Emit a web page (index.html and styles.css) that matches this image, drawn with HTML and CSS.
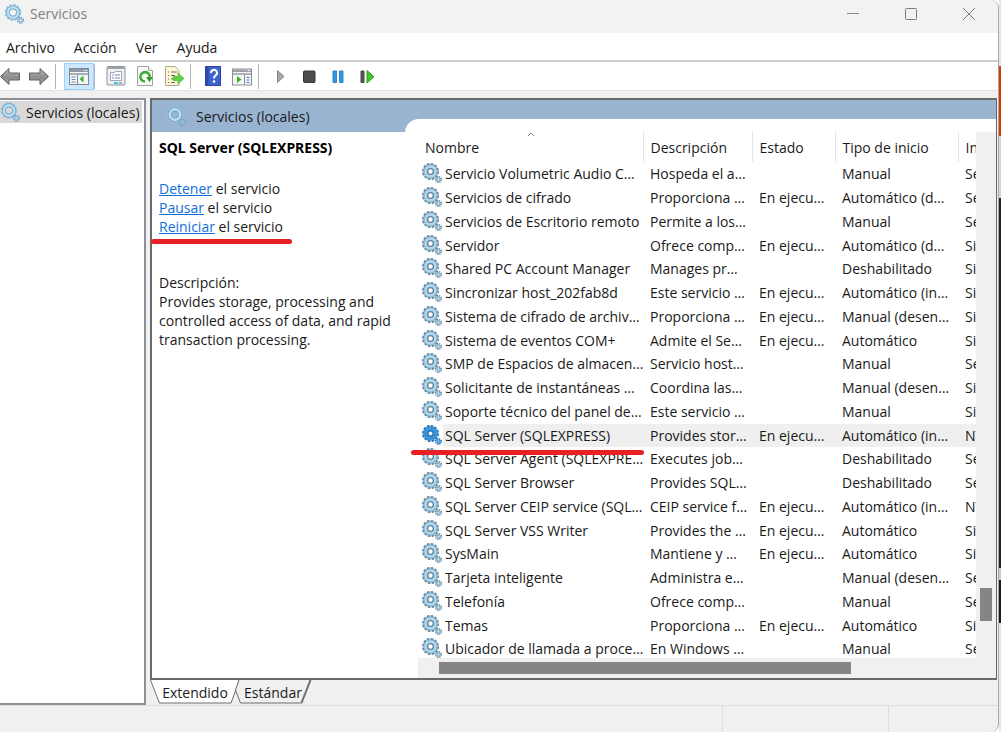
FILE: index.html
```
<!DOCTYPE html>
<html lang="es">
<head>
<meta charset="utf-8">
<title>Servicios</title>
<link rel="stylesheet" href="styles.css">
</head>
<body>
<svg class="defs" aria-hidden="true">
  <symbol id="gear" viewBox="0 0 20 20">
    <circle cx="8.500" cy="8.500" r="7.400" fill="none" stroke="#5f8399" stroke-width="2.200" stroke-dasharray="2.6 1.27"/>
    <circle cx="8.500" cy="8.500" r="5" fill="none" stroke="#7fabc8" stroke-width="4.600"/>
    <circle cx="8.500" cy="8.500" r="4.600" fill="none" stroke="#b0d6ec" stroke-width="3.200"/>
    <circle cx="8.500" cy="8.500" r="2.900" fill="#fff" stroke="#5f8095" stroke-width="1.300"/>
    <circle cx="16.500" cy="16.500" r="2.900" fill="none" stroke="#5f8399" stroke-width="1.400" stroke-dasharray="1.3 .98"/>
    <circle cx="16.500" cy="16.500" r="1.700" fill="#dceef8" stroke="#86afca" stroke-width="1.500"/>
  </symbol>
  <symbol id="gear-on" viewBox="0 0 20 20">
    <circle cx="8.500" cy="8.500" r="7.400" fill="none" stroke="#1c6fb4" stroke-width="2.200" stroke-dasharray="2.6 1.27"/>
    <circle cx="8.500" cy="8.500" r="4.900" fill="none" stroke="#3a92d8" stroke-width="4.800"/>
    <circle cx="8.500" cy="8.500" r="2.600" fill="#e8f4fd" stroke="#1f6fb0" stroke-width="1.200"/>
    <circle cx="16.500" cy="16.500" r="2.900" fill="none" stroke="#1c6fb4" stroke-width="1.400" stroke-dasharray="1.3 .98"/>
    <circle cx="16.500" cy="16.500" r="1.700" fill="#9ccbf0" stroke="#3a92d8" stroke-width="1.500"/>
  </symbol>
  <symbol id="gear-soft" viewBox="0 0 20 20">
    <circle cx="9" cy="8.500" r="7.500" fill="none" stroke="#9dc3dc" stroke-width="1.800" stroke-dasharray="2.400 1.530"/>
    <circle cx="9" cy="8.500" r="5.200" fill="none" stroke="#6fa3c8" stroke-width="4.200"/>
    <circle cx="9" cy="8.500" r="5.200" fill="none" stroke="#b9dff2" stroke-width="2.600"/>
    <circle cx="16.500" cy="16.300" r="2.900" fill="none" stroke="#6f9cbc" stroke-width="1.400" stroke-dasharray="1.3 .98"/>
    <circle cx="16.500" cy="16.300" r="1.700" fill="none" stroke="#8fbcd8" stroke-width="1.500"/>
  </symbol>
  <linearGradient id="arrow-fill" x1="0" y1="0" x2="0" y2="1">
    <stop offset="0" stop-color="#bdbdbd"/><stop offset=".55" stop-color="#8c8c8c"/><stop offset="1" stop-color="#a5a5a5"/>
  </linearGradient>
</svg>

<div class="desktop">
<div class="window">
  <header class="titlebar">
    <svg class="icon"><use href="#gear-soft"/></svg>
    <span class="title">Servicios</span>
    <button class="caption" aria-label="Minimizar"><svg viewBox="0 0 14 14"><path d="M1 6.5h12" stroke="#8a8a8a"/></svg></button>
    <button class="caption" aria-label="Maximizar"><svg viewBox="0 0 14 14"><rect x="1.5" y="1.500" width="11" height="11" rx="1" fill="none" stroke="#7c7c7c"/></svg></button>
    <button class="caption" aria-label="Cerrar"><svg viewBox="0 0 14 14"><path d="M1 1l12 12M13 1L1 13" stroke="#7c7c7c"/></svg></button>
  </header>

  <nav class="menubar">
    <button>Archivo</button><button>Acción</button><button>Ver</button><button>Ayuda</button>
  </nav>

  <div class="toolbar">
    <button aria-label="Atrás"><svg class="icon" viewBox="0 0 20 20"><path d="M.5 10.500L9 2.500V7H19.500V14H9V18.500z" fill="url(#arrow-fill)" stroke="#5e5e5e"/></svg></button>
    <button aria-label="Adelante"><svg class="icon" viewBox="0 0 20 20"><path d="M19.500 10.500L11 2.500V7H.5V14H11V18.500z" fill="url(#arrow-fill)" stroke="#5e5e5e"/></svg></button>
    <i class="sep"></i>
    <button class="pressed" aria-label="Mostrar árbol de consola" aria-pressed="true"><svg class="icon" viewBox="0 0 20 20"><rect x=".5" y="2.500" width="19" height="16" fill="#f4f5f6" stroke="#7f8992"/><path d="M1 3h18v3H1z" fill="#8d99a5"/><path d="M14 4.500h1M16 4.500h2" stroke="#e8eef4"/><path d="M1 8h18" stroke="#a5afb8" stroke-width="2"/><path d="M8.500 9v9" stroke="#7f8992"/><path d="M2.500 11h4M2.500 13.500h4M2.500 16h4" stroke="#5b8fc4"/><path d="M14.500 9.500v7L10.500 13z" fill="#3fae29"/></svg></button>
    <i class="sep"></i>
    <button aria-label="Propiedades"><svg class="icon" viewBox="0 0 20 20"><rect x="1" y=".5" width="18" height="18.500" rx="1" fill="#eef0f2" stroke="#8b939b"/><path d="M1.500 1h17v2h-17z" fill="#9ba4ad"/><path d="M4.500 6.500h4l1-1h6v9h-11z" fill="#fff" stroke="#9aa5b5"/><path d="M6 9h2M9 9h5M6 12h2M9 12h5" stroke="#6b87ad"/><path d="M8 17h4" stroke="#45c5e8" stroke-width="2"/><path d="M13 17h3" stroke="#a3abb3" stroke-width="2"/></svg></button>
    <button aria-label="Actualizar"><svg class="icon" viewBox="0 0 20 20"><path d="M2.500.5h11l4 4v15h-15z" fill="#f8f8f6" stroke="#a3a3a0"/><path d="M13.500.5v4h4" fill="#fff" stroke="#a3a3a0"/><path d="M10 15.500A4.700 4.700 0 1 1 14.800 11" fill="none" stroke="#3dae35" stroke-width="2.600"/><path d="M11 11h7l-3.500 5z" fill="#2c9e2b"/></svg></button>
    <button aria-label="Exportar lista"><svg class="icon" viewBox="0 0 20 20"><path d="M1.500.5h9.500l4 4v15H1.500z" fill="#fdf6d8" stroke="#b0a68a"/><path d="M4 6h1M7 6h6M4 9.500h1M7 9.500h4M4 13h1M7 13h3M4 16.500h1M7 16.500h4" stroke="#6f6a5c"/><path d="M9 10.500h5V7l6 5.500-6 5.500v-3.500H9z" fill="#5fd03f" stroke="#48ad31" stroke-width=".6"/></svg></button>
    <i class="sep"></i>
    <button aria-label="Ayuda"><svg class="icon" viewBox="0 0 20 20"><rect x="2.500" y=".5" width="15" height="19" fill="#3e63cf" stroke="#2a449c"/><path d="M3 1h2.500v18H3z" fill="#2d4bb0"/><path d="M8 7a3 3 0 1 1 4.600 2.400Q11 10.500 11 12.500" fill="none" stroke="#fff" stroke-width="2"/><circle cx="11" cy="15.500" r="1.300" fill="#fff"/></svg></button>
    <button aria-label="Mostrar panel de acciones"><svg class="icon" viewBox="0 0 20 20"><rect x=".5" y="3" width="19" height="16" fill="#f4f5f6" stroke="#8a8f94"/><path d="M1 3.500h18v2.500H1z" fill="#9aa1a8"/><path d="M14 4.500h1M16 4.500h2" stroke="#eee"/><path d="M1 8h18" stroke="#aeb3b8" stroke-width="2"/><path d="M12.500 9v10" stroke="#8a8f94"/><path d="M14.500 11.500h3M14.500 14h3M14.500 16.500h3" stroke="#4f83b8"/><path d="M5 10v7l4.500-3.500z" fill="#3fae29"/></svg></button>
    <i class="sep"></i>
    <button class="run" aria-label="Iniciar"><svg class="icon" viewBox="0 0 20 20"><path d="M7.500 4.500v12l6.500-6z" fill="#a9a9a9" stroke="#858585"/></svg></button>
    <button class="run" aria-label="Detener"><svg class="icon" viewBox="0 0 20 20"><rect x="4.500" y="5" width="11.500" height="11.500" rx="1" fill="#4c4c4c" stroke="#383838"/></svg></button>
    <button class="run" aria-label="Pausar"><svg class="icon" viewBox="0 0 20 20"><path d="M5 5h3.500v11.500H5zM11.500 5H15v11.500h-3.500z" fill="#2a9be6" stroke="#1c75b8" stroke-width=".8"/></svg></button>
    <button class="run" aria-label="Reiniciar"><svg class="icon" viewBox="0 0 20 20"><path d="M4 5h3v11.500H4z" fill="#555" stroke="#444"/><path d="M10 4.500v12.500l7-6.200z" fill="#46c52c" stroke="#2f9a1c"/></svg></button>
  </div>

  <main class="console">
    <aside class="tree">
      <div class="node"><svg class="icon"><use href="#gear-soft"/></svg><span>Servicios (locales)</span></div>
    </aside>

    <div class="result">
      <div class="pane">
        <section class="extended">
          <h1><svg class="icon"><use href="#gear-soft"/></svg>Servicios (locales)</h1>
          <div class="details">
            <h2>SQL Server (SQLEXPRESS)</h2>
            <p class="actions"><a href="#">Detener</a> el servicio<br><a href="#">Pausar</a> el servicio<br><a href="#">Reiniciar</a> el servicio<i class="mark"></i></p>
            <p>Descripción:<br>Provides storage, processing and controlled access of data, and rapid transaction processing.</p>
          </div>
        </section>

        <section class="list">
          <div class="view">
            <table>
              <colgroup><col class="c-name"><col class="c-desc"><col class="c-state"><col class="c-start"><col></colgroup>
              <thead>
                <tr><th>Nombre<svg class="sort" viewBox="0 0 8 5"><path d="M1 4l3-3 3 3" fill="none" stroke="#8c8c8c"/></svg></th><th>Descripción</th><th>Estado</th><th>Tipo de inicio</th><th>Iniciar sesión como</th></tr>
              </thead>
              <tbody>
                <tr><td><svg class="icon"><use href="#gear"/></svg>Servicio Volumetric Audio C…</td><td>Hospeda el a…</td><td></td><td>Manual</td><td>Servicio local</td></tr>
                <tr><td><svg class="icon"><use href="#gear"/></svg>Servicios de cifrado</td><td>Proporciona …</td><td>En ejecu…</td><td>Automático (d…</td><td>Servicio de red</td></tr>
                <tr><td><svg class="icon"><use href="#gear"/></svg>Servicios de Escritorio remoto</td><td>Permite a los…</td><td></td><td>Manual</td><td>Servicio de red</td></tr>
                <tr><td><svg class="icon"><use href="#gear"/></svg>Servidor</td><td>Ofrece comp…</td><td>En ejecu…</td><td>Automático (d…</td><td>Sistema local</td></tr>
                <tr><td><svg class="icon"><use href="#gear"/></svg>Shared PC Account Manager</td><td>Manages pr…</td><td></td><td>Deshabilitado</td><td>Sistema local</td></tr>
                <tr><td><svg class="icon"><use href="#gear"/></svg>Sincronizar host_202fab8d</td><td>Este servicio …</td><td>En ejecu…</td><td>Automático (in…</td><td>Sistema local</td></tr>
                <tr><td><svg class="icon"><use href="#gear"/></svg>Sistema de cifrado de archiv…</td><td>Proporciona …</td><td>En ejecu…</td><td>Manual (desen…</td><td>Sistema local</td></tr>
                <tr><td><svg class="icon"><use href="#gear"/></svg>Sistema de eventos COM+</td><td>Admite el Se…</td><td>En ejecu…</td><td>Automático</td><td>Sistema local</td></tr>
                <tr><td><svg class="icon"><use href="#gear"/></svg>SMP de Espacios de almacen…</td><td>Servicio host…</td><td></td><td>Manual</td><td>Servicio de red</td></tr>
                <tr><td><svg class="icon"><use href="#gear"/></svg>Solicitante de instantáneas …</td><td>Coordina las…</td><td></td><td>Manual (desen…</td><td>Sistema local</td></tr>
                <tr><td><svg class="icon"><use href="#gear"/></svg>Soporte técnico del panel de…</td><td>Este servicio …</td><td></td><td>Manual</td><td>Sistema local</td></tr>
                <tr class="selected"><td><svg class="icon"><use href="#gear-on"/></svg>SQL Server (SQLEXPRESS)<i class="mark"></i></td><td>Provides stor…</td><td>En ejecu…</td><td>Automático (in…</td><td>NT Service</td></tr>
                <tr><td><svg class="icon"><use href="#gear"/></svg>SQL Server Agent (SQLEXPRE…</td><td>Executes job…</td><td></td><td>Deshabilitado</td><td>Servicio de red</td></tr>
                <tr><td><svg class="icon"><use href="#gear"/></svg>SQL Server Browser</td><td>Provides SQL…</td><td></td><td>Deshabilitado</td><td>Servicio local</td></tr>
                <tr><td><svg class="icon"><use href="#gear"/></svg>SQL Server CEIP service (SQL…</td><td>CEIP service f…</td><td>En ejecu…</td><td>Automático (in…</td><td>NT Service</td></tr>
                <tr><td><svg class="icon"><use href="#gear"/></svg>SQL Server VSS Writer</td><td>Provides the …</td><td>En ejecu…</td><td>Automático</td><td>Sistema local</td></tr>
                <tr><td><svg class="icon"><use href="#gear"/></svg>SysMain</td><td>Mantiene y …</td><td>En ejecu…</td><td>Automático</td><td>Sistema local</td></tr>
                <tr><td><svg class="icon"><use href="#gear"/></svg>Tarjeta inteligente</td><td>Administra e…</td><td></td><td>Manual (desen…</td><td>Servicio local</td></tr>
                <tr><td><svg class="icon"><use href="#gear"/></svg>Telefonía</td><td>Ofrece comp…</td><td></td><td>Manual</td><td>Servicio de red</td></tr>
                <tr><td><svg class="icon"><use href="#gear"/></svg>Temas</td><td>Proporciona …</td><td>En ejecu…</td><td>Automático</td><td>Sistema local</td></tr>
                <tr><td><svg class="icon"><use href="#gear"/></svg>Ubicador de llamada a proce…</td><td>En Windows …</td><td></td><td>Manual</td><td>Servicio de red</td></tr>
              </tbody>
            </table>
          </div>
          <div class="vscroll"><i></i></div>
          <div class="hscroll"><i></i></div>
        </section>
      </div>

      <div class="tabs">
        <button class="tab active"><svg viewBox="0 0 90 24" preserveAspectRatio="none"><path d="M.5 0L9.500 23H81L89.500 0" fill="#fff" stroke="#6e6e6e"/></svg><span>Extendido</span></button>
        <button class="tab"><svg viewBox="0 0 78 24" preserveAspectRatio="none"><path d="M5 0L1.500 10L6.500 23H67.500L76.500 0" fill="#f0f0f0" stroke="none"/><path d="M5 0L1.500 10L6.500 23H67.500" fill="none" stroke="#6e6e6e"/><path d="M67.500 23L76.500 0" stroke="#6e6e6e" stroke-width="2"/></svg><span>Estándar</span></button>
      </div>
    </div>
  </main>

  <footer class="status"><span></span><span></span><span></span></footer>
</div>
<div class="behind"></div>
</div>
</body>
</html>
```
FILE: styles.css
```
* { box-sizing: border-box; }

body {
  margin: 0;
  font: 14px/19px "Open Sans", "Noto Sans", sans-serif;
  color: #1a1a1a;
}

button {
  border: 0;
  padding: 0;
  background: none;
  font: inherit;
  color: inherit;
}

.defs { position: absolute; width: 0; height: 0; }
.icon { width: 20px; height: 20px; flex: none; display: block; }

.desktop { display: flex; height: 100vh; }
.window {
  flex: 1;
  min-width: 0;
  display: flex;
  flex-direction: column;
  background: #f0f0f0;
  border-right: 1px solid #a8a8a8;
  border-radius: 0 8px 8px 0;
}
.behind {
  width: 2px;
  background: linear-gradient(#e8e8e8 66px, #d83b01 66px, #d83b01 136px, #d8d8d8 136px, #d8d8d8 198px, #222 198px, #222 568px, #ccc 568px, #ccc 580px, #1d1828 580px, #1d1828 623px, #e8e8e8 623px);
}

/* Title, menu and tool bars */
.titlebar {
  display: flex;
  align-items: center;
  height: 33px;
  padding: 0 0 6px 4px;
  background: #f2f2f2;
  border-top-right-radius: 8px;
  color: #808080;
}
.title { flex: 1; padding-left: 6px; }
.caption { width: 58px; height: 28px; display: grid; place-items: center; }
.caption svg { width: 14px; height: 14px; }

.menubar {
  display: flex;
  gap: 19px;
  height: 29px;
  padding: 2px 6px 0;
  background: #fff;
  border-bottom: 2px solid #cbcdcf;
}

.toolbar {
  display: flex;
  align-items: center;
  height: 29px;
  background: #fff;
  border-bottom: 1px solid #e2e2e2;
}
.toolbar button { width: 29px; height: 28px; display: grid; place-items: center; }
.toolbar button:first-child { width: 24px; padding-right: 4px; }
.toolbar .sep + button { margin-left: 7px; }
.toolbar .sep + .run { margin-left: 6px; }
.toolbar .sep { width: 1px; height: 25px; margin-left: 2px; background: #b4b4b4; }
.toolbar .sep + .pressed { background: #cce8ff; border: 1px solid #99d1ff; width: 30px; height: 27px; margin-left: 8px; }
.toolbar .pressed + .sep { margin-left: 0; }
.toolbar .pressed + .sep + button { margin-left: 6px; }

/* Console body */
.console { flex: 1; min-height: 0; display: flex; gap: 4px; padding-top: 7px; }

.tree {
  width: 146px;
  padding: 1px 2px 2px 0;
  background: #fff;
  border: 2px solid #8b909a;
  border-left: 0;
}
.node {
  display: flex;
  align-items: center;
  gap: 6px;
  height: 22px;
  background: #d9d9d9;
  white-space: nowrap;
}

.result { flex: 1; min-width: 0; display: flex; flex-direction: column; padding-right: 1px; }
.pane {
  flex: 1;
  min-height: 0;
  display: flex;
  background: #99b4d1;
  border: 2px solid #696969;
  border-right: 1px solid #696969;
}

.extended { width: 253px; display: flex; flex-direction: column; }
.extended h1 {
  display: flex;
  align-items: center;
  gap: 10px;
  height: 32px;
  margin: 0;
  padding-left: 14px;
  font: inherit;
}
.details { flex: 1; padding: 6px 7px; background: #fff; }
.details h2 { margin: 0 0 22px; font: bold 14px/19px "Noto Sans", "Open Sans", sans-serif; color: #000; }
.details p { margin: 0 0 37px; }
.details a { color: #1070d8; }
.actions { position: relative; }
.mark {
  position: absolute;
  height: 5px;
  border-radius: 3px;
  background: #e81f23;
}
.actions .mark { left: -8px; bottom: -8px; width: 141px; }

.list {
  flex: 1;
  min-width: 0;
  display: grid;
  grid-template: minmax(0, 1fr) 20px / minmax(0, 1fr) 20px;
  margin-top: 19px;
  background: #fff;
  border-top-left-radius: 14px;
}
.view { overflow: hidden; padding: 13px 0 0 13px; }
table { width: 100%; table-layout: fixed; border-collapse: collapse; }
.c-name { width: 225px; }
.c-desc { width: 109px; }
.c-state { width: 83px; }
.c-start { width: 123px; }
th, td { padding: 0 0 0 7px; white-space: nowrap; text-align: left; font-weight: normal; }
th:last-child, td:last-child { overflow: hidden; }
th { position: relative; height: 30px; border-right: 1px solid #e5e5e5; }
th:last-child { border: 0; }
.sort { position: absolute; left: 109px; top: 0; width: 8px; height: 5px; }
tbody tr { height: 24px; }
tbody tr:nth-child(4n) { height: 23px; }
td:first-child { position: relative; padding-left: 4px; }
td .icon { float: left; margin: -1px 3px 0 0; }
td { line-height: 20px; }
.selected td { background: #efefef; }
.selected td:first-child { background: linear-gradient(to right, #fff 25px, #efefef 25px); }
td .mark { left: -7px; top: 26px; width: 233px; z-index: 1; }

.vscroll, .hscroll { background: #f0f0f0; }
.vscroll { display: flex; justify-content: center; align-items: flex-end; margin-top: 13px; padding-bottom: 37px; }
.vscroll i { width: 12px; height: 33px; background: #858585; }
.hscroll { grid-column: 1 / 3; margin-left: 13px; padding: 4px 0 4px 21px; }
.hscroll i { display: block; width: 74%; height: 12px; background: #858585; }

.tabs { display: flex; height: 25px; }
.tab { position: relative; width: 90px; height: 24px; line-height: 25px; }
.tab svg { position: absolute; inset: 0; width: 100%; height: 100%; }
.tab span { position: relative; }
.tab:last-child { width: 78px; margin-left: -6px; }

.status { display: flex; height: 27px; border-top: 1px solid #dcdcdc; }
.status span { width: 166px; border-right: 1px solid #dedede; }
.status span:first-child { flex: 1; }
.status span:last-child { width: 109px; border: 0; }
```
